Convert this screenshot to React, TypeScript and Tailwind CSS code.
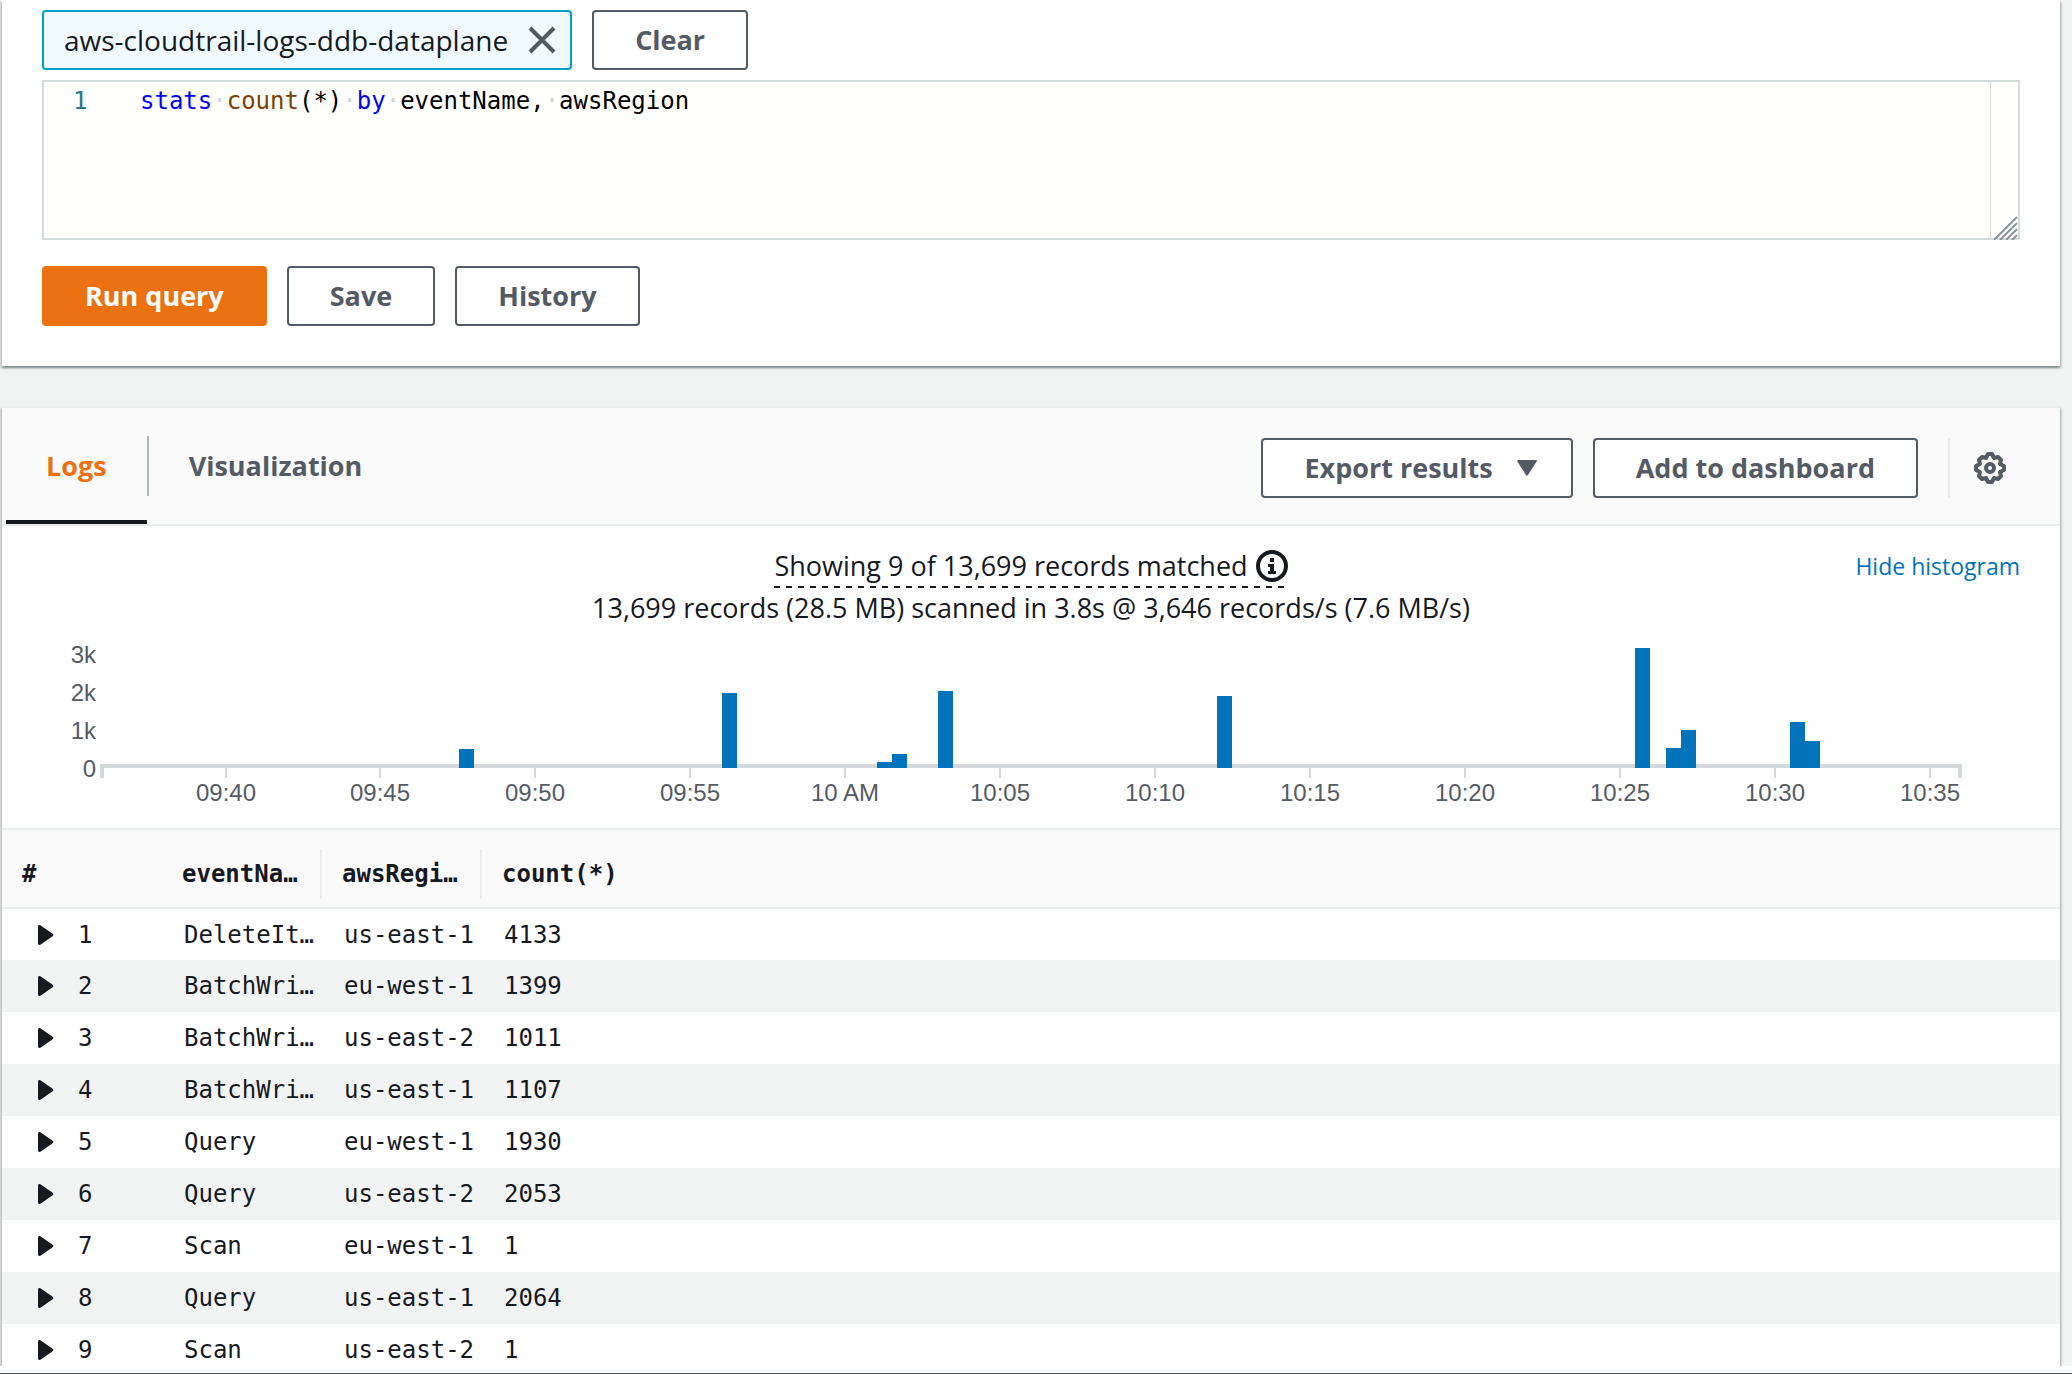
import { useState } from 'react'
import clsx from 'clsx'

type Row = { eventName: string; awsRegion: string; count: number }

const rows: Row[] = [
  { eventName: 'DeleteIt…', awsRegion: 'us-east-1', count: 4133 },
  { eventName: 'BatchWri…', awsRegion: 'eu-west-1', count: 1399 },
  { eventName: 'BatchWri…', awsRegion: 'us-east-2', count: 1011 },
  { eventName: 'BatchWri…', awsRegion: 'us-east-1', count: 1107 },
  { eventName: 'Query', awsRegion: 'eu-west-1', count: 1930 },
  { eventName: 'Query', awsRegion: 'us-east-2', count: 2053 },
  { eventName: 'Scan', awsRegion: 'eu-west-1', count: 1 },
  { eventName: 'Query', awsRegion: 'us-east-1', count: 2064 },
  { eventName: 'Scan', awsRegion: 'us-east-2', count: 1 },
]

// x and top of each 30s bucket, in chart units
const bars = [
  { x: 417, top: 109 },
  { x: 680, top: 53 },
  { x: 835, top: 122 },
  { x: 850, top: 114 },
  { x: 896, top: 51 },
  { x: 1175, top: 56 },
  { x: 1593, top: 8 },
  { x: 1624, top: 108 },
  { x: 1639, top: 90 },
  { x: 1748, top: 82 },
  { x: 1763, top: 101 },
]

const xTicks = ['09:40', '09:45', '09:50', '09:55', '10 AM', '10:05', '10:10', '10:15', '10:20', '10:25', '10:30', '10:35']
const yTicks = ['0', '1k', '2k', '3k']

const tickX = (i: number) => 183 + Math.floor(i * 154.95)

const btn = 'h-[60px] rounded-sm border-2 border-[#545b64] bg-white text-[27px] font-bold text-[#545b64]'
const panelShadow = 'shadow-[0_2px_2px_#001c244d,2px_2px_2px_#001c2426,-2px_2px_2px_#001c2426]'

function Histogram() {
  return (
    <svg viewBox="0 0 1978 188" className="block w-full" role="img" aria-label="Records over time">
      <g fill="#545b64" fontFamily="'Liberation Sans', Arial, sans-serif" fontSize="24">
        {yTicks.map((t, i) => (
          <text key={t} x="54" y={137 - i * 38} textAnchor="end">
            {t}
          </text>
        ))}
        {xTicks.map((t, i) => (
          <text key={t} x={tickX(i) + 1} y="161" textAnchor="middle">
            {t}
          </text>
        ))}
      </g>
      <path d="M60 138V126H1918V138" fill="none" stroke="#d5d8db" strokeWidth="4" />
      <g fill="#d5d8db">
        {xTicks.map((t, i) => (
          <rect key={t} x={tickX(i)} y="128" width="2" height="10" />
        ))}
      </g>
      <g fill="#0073bb">
        {bars.map((b) => (
          <rect key={b.x} x={b.x} y={b.top} width="15" height={128 - b.top} />
        ))}
      </g>
    </svg>
  )
}

function QueryEditor() {
  const [query, setQuery] = useState('stats count(*) by eventName, awsRegion')
  const tokens = query.split(/(\s|\b)/)

  return (
    <div className="relative flex h-[160px] border-2 border-[#d5dbdb] bg-[#fffffe] font-['DejaVu_Sans_Mono',monospace] text-2xl leading-[38px]">
      <div className="w-24 pl-[29px] text-[#237893]">1</div>
      <div className="relative flex-1">
        <pre aria-hidden="true" className="font-[inherit] text-black">
          {tokens.map((t, i) => (
            <span
              key={i}
              className={clsx(
                (t === 'stats' || t === 'by') && 'text-[#0000ff]',
                t === 'count' && 'text-[#804000]',
                t === ' ' && 'text-[#d3d3d3]',
              )}
            >
              {t === ' ' ? '·' : t}
            </span>
          ))}
        </pre>
        <textarea
          aria-label="Query"
          spellCheck={false}
          value={query}
          onChange={(e) => setQuery(e.target.value)}
          className="absolute inset-0 resize-none bg-transparent text-transparent caret-black outline-none"
        />
      </div>
      <div className="w-7 border-l border-[#d5dbdb]" />
      <svg className="absolute right-0 -bottom-0.5 size-6" viewBox="0 0 24 24" fill="none" stroke="#879596" strokeWidth="2">
        <path d="M0 24L23 1M6 24L23 7M12 24L23 13M18 24L23 19" />
      </svg>
    </div>
  )
}

export default function App() {
  const [tab, setTab] = useState('Logs')
  const [open, setOpen] = useState<number[]>([])

  const toggle = (n: number) => setOpen((prev) => (prev.includes(n) ? prev.filter((x) => x !== n) : [...prev, n]))

  return (
    <div className="flex h-screen flex-col border-b border-[#545b64] bg-white font-['Open_Sans',sans-serif] text-[#16191f]">
      <main className="mb-[7px] min-h-0 flex-1 overflow-hidden bg-[#f2f3f3] pr-3 pl-0.5">
        <section className={clsx('bg-white px-10 pt-2.5 pb-10', panelShadow)}>
          <div className="flex gap-5">
            <div className="flex h-[60px] items-center gap-5 rounded-sm border-2 border-[#00a1c9] bg-[#f1faff] pr-3.5 pl-5 text-[28px]">
              aws-cloudtrail-logs-ddb-dataplane
              <button type="button" aria-label="Remove log group">
                <svg className="size-7" viewBox="0 0 28 28" fill="none" stroke="#545b64" strokeWidth="4">
                  <path d="M2 2L26 26M26 2L2 26" />
                </svg>
              </button>
            </div>
            <button type="button" className={clsx(btn, 'px-[41px]')}>
              Clear
            </button>
          </div>

          <div className="mt-2.5">
            <QueryEditor />
          </div>

          <div className="mt-[26px] flex gap-5">
            <button
              type="button"
              className="h-[60px] rounded-sm border-2 border-[#ec7211] bg-[#ec7211] px-[41px] text-[27px] font-bold text-white"
            >
              Run query
            </button>
            <button type="button" className={clsx(btn, 'px-[41px]')}>
              Save
            </button>
            <button type="button" className={clsx(btn, 'px-[41px]')}>
              History
            </button>
          </div>
        </section>

        <section className={clsx('mt-10 border-t-2 border-[#eaeded] bg-white', panelShadow)}>
          <div className="flex h-[118px] items-start justify-between border-b-2 border-[#eaeded] bg-[#fafafa]">
            <div role="tablist" className="flex pl-1">
              {['Logs', 'Visualization'].map((t, i) => (
                <button
                  key={t}
                  type="button"
                  role="tab"
                  aria-selected={tab === t}
                  onClick={() => setTab(t)}
                  className={clsx(
                    'flex h-[116px] items-center border-b-4 pt-1 text-[27px] font-bold',
                    tab === t ? 'border-[#16191f] text-[#ec7211]' : 'border-transparent text-[#545b64]',
                  )}
                >
                  <span className={clsx('flex h-[60px] items-center px-10', i > 0 && 'border-l-2 border-[#aab7b8]')}>{t}</span>
                </button>
              ))}
            </div>
            <div className="flex items-center gap-5 pt-[30px] pr-[54px]">
              <button type="button" aria-haspopup="menu" className={clsx(btn, 'flex items-center gap-6 pr-[34px] pl-[41px]')}>
                Export results
                <svg className="h-4 w-5" viewBox="0 0 20 16" fill="#545b64">
                  <path d="M1 0H19Q20 0 20 1L11 15Q10 16 9 15L0 1Q0 0 1 0Z" />
                </svg>
              </button>
              <button type="button" className={clsx(btn, 'px-[41px]')}>
                Add to dashboard
              </button>
              <div className="ml-2.5 h-[60px] w-0.5 bg-[#eaeded]" />
              <button type="button" aria-label="Preferences" className="pl-1">
                <svg className="size-8" viewBox="0 0 32 32" fill="none" stroke="#545b64" strokeWidth="4" strokeLinejoin="round">
                  <circle cx="16" cy="16" r="4" />
                  <path d="M14 2H18L20 6L24 5L27 8L26 12L30 14V18L26 20L27 24L24 27L20 26L18 30H14L12 26L8 27L5 24L6 20L2 18V14L6 12L5 8L8 5L12 6Z" />
                </svg>
              </button>
            </div>
          </div>

          <div className="grid grid-cols-[1fr_auto_1fr] items-start px-10 pt-5">
            <div />
            <div className="flex flex-col items-center text-[27px] leading-10">
              <div className="flex items-center gap-2 bg-[linear-gradient(90deg,#16191f_50%,transparent_50%)] bg-[length:12px_2px] bg-bottom-left bg-repeat-x pb-0.5">
                Showing 9 of 13,699 records matched
                <svg className="size-8" viewBox="0 0 32 32">
                  <circle cx="16" cy="16" r="14" fill="none" stroke="#16191f" strokeWidth="4" />
                  <path d="M14 8H18V12H14ZM12 14H18V21H20V24H12V21H14V17H12Z" fill="#16191f" />
                </svg>
              </div>
              <div>13,699 records (28.5 MB) scanned in 3.8s @ 3,646 records/s (7.6 MB/s)</div>
            </div>
            <a href="#histogram" className="justify-self-end text-[23px] leading-10 text-[#0073bb]">
              Hide histogram
            </a>
          </div>

          <div id="histogram" className="px-10 pt-3">
            <Histogram />
          </div>

          <table className="w-full table-fixed text-left font-['DejaVu_Sans_Mono',monospace] text-2xl">
            <colgroup>
              <col className="w-40" />
              <col className="w-40" />
              <col className="w-40" />
              <col />
            </colgroup>
            <thead className="border-y-2 border-[#eaeded] bg-[#fafafa]">
              <tr className="h-[79px]">
                <th className="pt-2.5 pl-5">#</th>
                {['eventNa…', 'awsRegi…', 'count(*)'].map((h, i) => (
                  <th key={h} className="pt-2.5">
                    <div className={clsx('flex h-[50px] items-center pl-5', i < 2 && 'border-r-2 border-[#eaeded]')}>{h}</div>
                  </th>
                ))}
              </tr>
            </thead>
            <tbody>
              {rows.map((r, i) => (
                <tr key={i} className="h-[52px] even:bg-[#f2f3f3]">
                  <td>
                    <div className="flex items-center gap-6 pl-9">
                      <button
                        type="button"
                        aria-label={`Expand row ${i + 1}`}
                        aria-expanded={open.includes(i)}
                        onClick={() => toggle(i)}
                      >
                        <svg className="h-5 w-4" viewBox="0 0 16 20" fill="#16191f">
                          <path d="M0 1Q0 0 2 0L15 9Q16 10 15 11L2 20Q0 20 0 19Z" />
                        </svg>
                      </button>
                      {i + 1}
                    </div>
                  </td>
                  <td className="pl-[22px]">{r.eventName}</td>
                  <td className="pl-[22px]">{r.awsRegion}</td>
                  <td className="pl-[22px]">{r.count}</td>
                </tr>
              ))}
            </tbody>
          </table>
        </section>
      </main>
    </div>
  )
}
